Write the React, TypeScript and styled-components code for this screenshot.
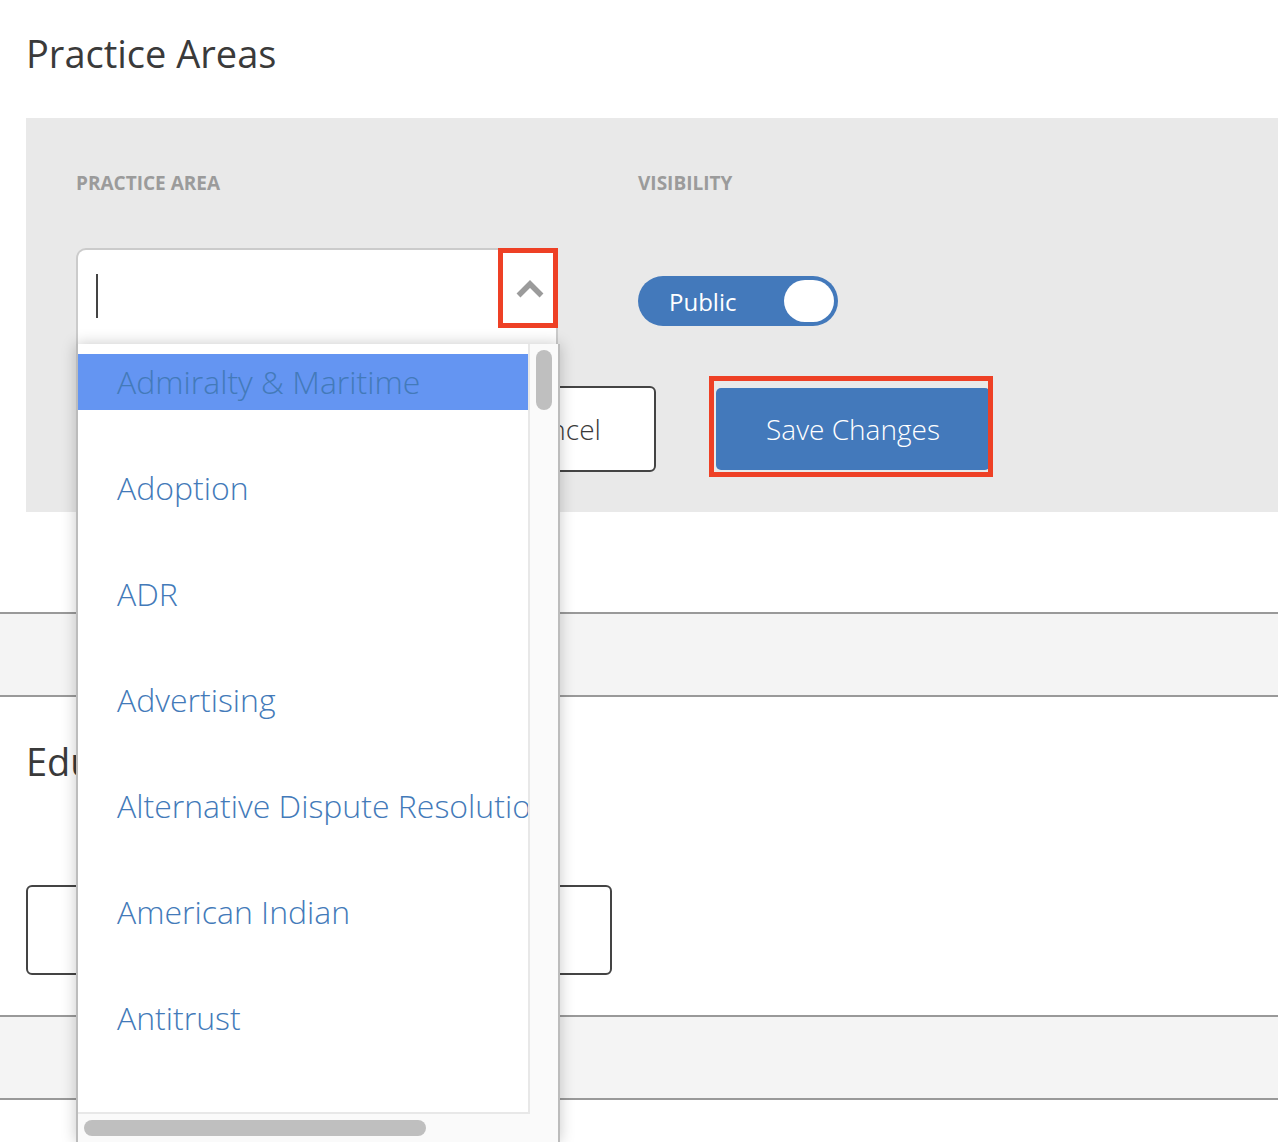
import React from 'react';
import styled, { createGlobalStyle } from 'styled-components';

const GlobalStyle = createGlobalStyle`
  html, body {
    margin: 0;
    padding: 0;
    background: #fff;
    overflow: hidden;
  }
  body {
    font-family: "Open Sans", "Liberation Sans", sans-serif;
    color: #3a3a3a;
  }
`;

const Page = styled.div`
  width: 1278px;
  height: 1142px;
  overflow: hidden;
  position: relative;
  box-sizing: border-box;
  padding-top: 26px;
`;

const Heading = styled.h2`
  margin: 0 0 0 26px;
  font-size: 38px;
  line-height: 54px;
  font-weight: 400;
  color: #3a3a3a;
`;

const Panel = styled.section`
  margin: 38px 0 0 26px;
  height: 394px;
  box-sizing: border-box;
  padding: 52px 0 0 50px;
  background: #e9e9e9;
`;

const Labels = styled.div`
  display: flex;
  height: 26px;
`;

const FieldLabel = styled.div<{ $width?: number }>`
  width: ${p => (p.$width ? `${p.$width}px` : 'auto')};
  font-size: 19px;
  line-height: 26px;
  font-weight: 700;
  color: #9b9b9b;
  text-transform: uppercase;
`;

const FieldRow = styled.div`
  display: flex;
  margin-top: 52px;
  height: 96px;
`;

const SelectWrap = styled.div`
  position: relative;
  width: 482px;
  height: 96px;
  margin-right: 80px;
`;

const SelectBox = styled.div`
  box-sizing: border-box;
  height: 96px;
  display: flex;
  align-items: flex-start;
  justify-content: space-between;
  padding: 24px 12px 0 18px;
  background: #fff;
  border: 2px solid #cbcbcb;
  border-bottom: none;
  border-radius: 10px 10px 0 0;
`;

const Caret = styled.span`
  width: 2px;
  height: 44px;
  background: #444;
`;

const Chevron = styled.svg`
  width: 28px;
  height: 18px;
  margin-top: 6px;
`;

const Menu = styled.div`
  position: absolute;
  top: 96px;
  left: 0;
  width: 484px;
  height: 798px;
  box-sizing: border-box;
  display: grid;
  grid-template-columns: 452px 1fr;
  grid-template-rows: 770px 1fr;
  background: #fafafa;
  border-left: 2px solid #bcbcbc;
  border-right: 2px solid #bcbcbc;
  box-shadow: 0 0 14px rgba(0, 0, 0, 0.22);
`;

const List = styled.ul`
  margin: 0;
  padding: 10px 0 0;
  list-style: none;
  overflow: hidden;
  background: #fff;
  border-right: 2px solid #e8e8e8;
  border-bottom: 2px solid #e8e8e8;
`;

const Item = styled.li<{ $active?: boolean }>`
  height: 56px;
  margin-bottom: 50px;
  padding-left: 39px;
  font-size: 32px;
  line-height: 56px;
  font-weight: 300;
  white-space: nowrap;
  color: #437ab9;
  background: ${p => (p.$active ? '#6495f2' : 'transparent')};
`;

const VerticalTrack = styled.div`
  padding: 6px 0 0 6px;
`;

const HorizontalTrack = styled.div`
  padding: 6px 0 0 6px;
`;

const Thumb = styled.div<{ $w: number; $h: number }>`
  width: ${p => p.$w}px;
  height: ${p => p.$h}px;
  border-radius: 8px;
  background: #bfbfbf;
`;

const ToggleCell = styled.div`
  padding-top: 28px;
`;

const Toggle = styled.div`
  box-sizing: border-box;
  width: 200px;
  height: 50px;
  display: flex;
  align-items: center;
  justify-content: space-between;
  padding: 0 4px 0 31px;
  border-radius: 25px;
  background: #4379bb;
  color: #fff;
  font-size: 24px;
  font-weight: 500;
`;

const Knob = styled.span`
  width: 50px;
  height: 42px;
  border-radius: 21px;
  background: #fff;
`;

const Actions = styled.div`
  display: flex;
  align-items: center;
  gap: 60px;
  margin: 42px 0 0 386px;
`;

const CancelButton = styled.button`
  box-sizing: border-box;
  width: 194px;
  height: 86px;
  border: 2px solid #444;
  border-radius: 6px;
  background: #fff;
  font: 300 28px "Open Sans", sans-serif;
  color: #3a3a3a;
`;

const SaveButton = styled.button`
  box-sizing: border-box;
  width: 274px;
  height: 82px;
  border: none;
  border-radius: 5px;
  background: #4379bb;
  font: 300 28px "Open Sans", sans-serif;
  color: #fff;
`;

const Band = styled.div<{ $top: number }>`
  box-sizing: border-box;
  height: 85px;
  margin-top: ${p => p.$top}px;
  background: #f4f4f4;
  border-top: 2px solid #999;
  border-bottom: 2px solid #999;
`;

const SubHeading = styled(Heading)`
  margin-top: 37px;
`;

const AddButton = styled.button`
  display: block;
  box-sizing: border-box;
  width: 586px;
  height: 90px;
  margin: 97px 0 0 26px;
  border: 2px solid #444;
  border-radius: 6px;
  background: #fff;
  font: 300 28px "Open Sans", sans-serif;
  color: #3a3a3a;
`;

const Annotation = styled.div<{ $x: number; $y: number; $w: number; $h: number }>`
  position: absolute;
  left: ${p => p.$x}px;
  top: ${p => p.$y}px;
  width: ${p => p.$w}px;
  height: ${p => p.$h}px;
  box-sizing: border-box;
  border: 5px solid #ee4025;
  pointer-events: none;
`;

const areas = [
  'Admiralty & Maritime',
  'Adoption',
  'ADR',
  'Advertising',
  'Alternative Dispute Resolution',
  'American Indian',
  'Antitrust',
  'Appellate',
];

export default function App() {
  return (
    <Page>
      <GlobalStyle />
      <Heading>Practice Areas</Heading>
      <Panel>
        <Labels>
          <FieldLabel $width={562}>Practice Area</FieldLabel>
          <FieldLabel>Visibility</FieldLabel>
        </Labels>
        <FieldRow>
          <SelectWrap>
            <SelectBox>
              <Caret />
              <Chevron viewBox="0 0 28 18">
                <polyline points="2.5,15.5 14,4 25.5,15.5" fill="none" stroke="#9b9b9b" strokeWidth="5.5" />
              </Chevron>
            </SelectBox>
            <Menu>
              <List>
                {areas.map((area, i) => (
                  <Item key={area} $active={i === 0}>{area}</Item>
                ))}
              </List>
              <VerticalTrack>
                <Thumb $w={16} $h={60} />
              </VerticalTrack>
              <HorizontalTrack>
                <Thumb $w={342} $h={16} />
              </HorizontalTrack>
            </Menu>
          </SelectWrap>
          <ToggleCell>
            <Toggle>
              Public
              <Knob />
            </Toggle>
          </ToggleCell>
        </FieldRow>
        <Actions>
          <CancelButton>Cancel</CancelButton>
          <SaveButton>Save Changes</SaveButton>
        </Actions>
      </Panel>
      <Band $top={100} />
      <SubHeading>Education</SubHeading>
      <AddButton>Add Education</AddButton>
      <Band $top={40} />
      <Annotation $x={498} $y={248} $w={60} $h={80} />
      <Annotation $x={709} $y={376} $w={284} $h={101} />
    </Page>
  );
}
